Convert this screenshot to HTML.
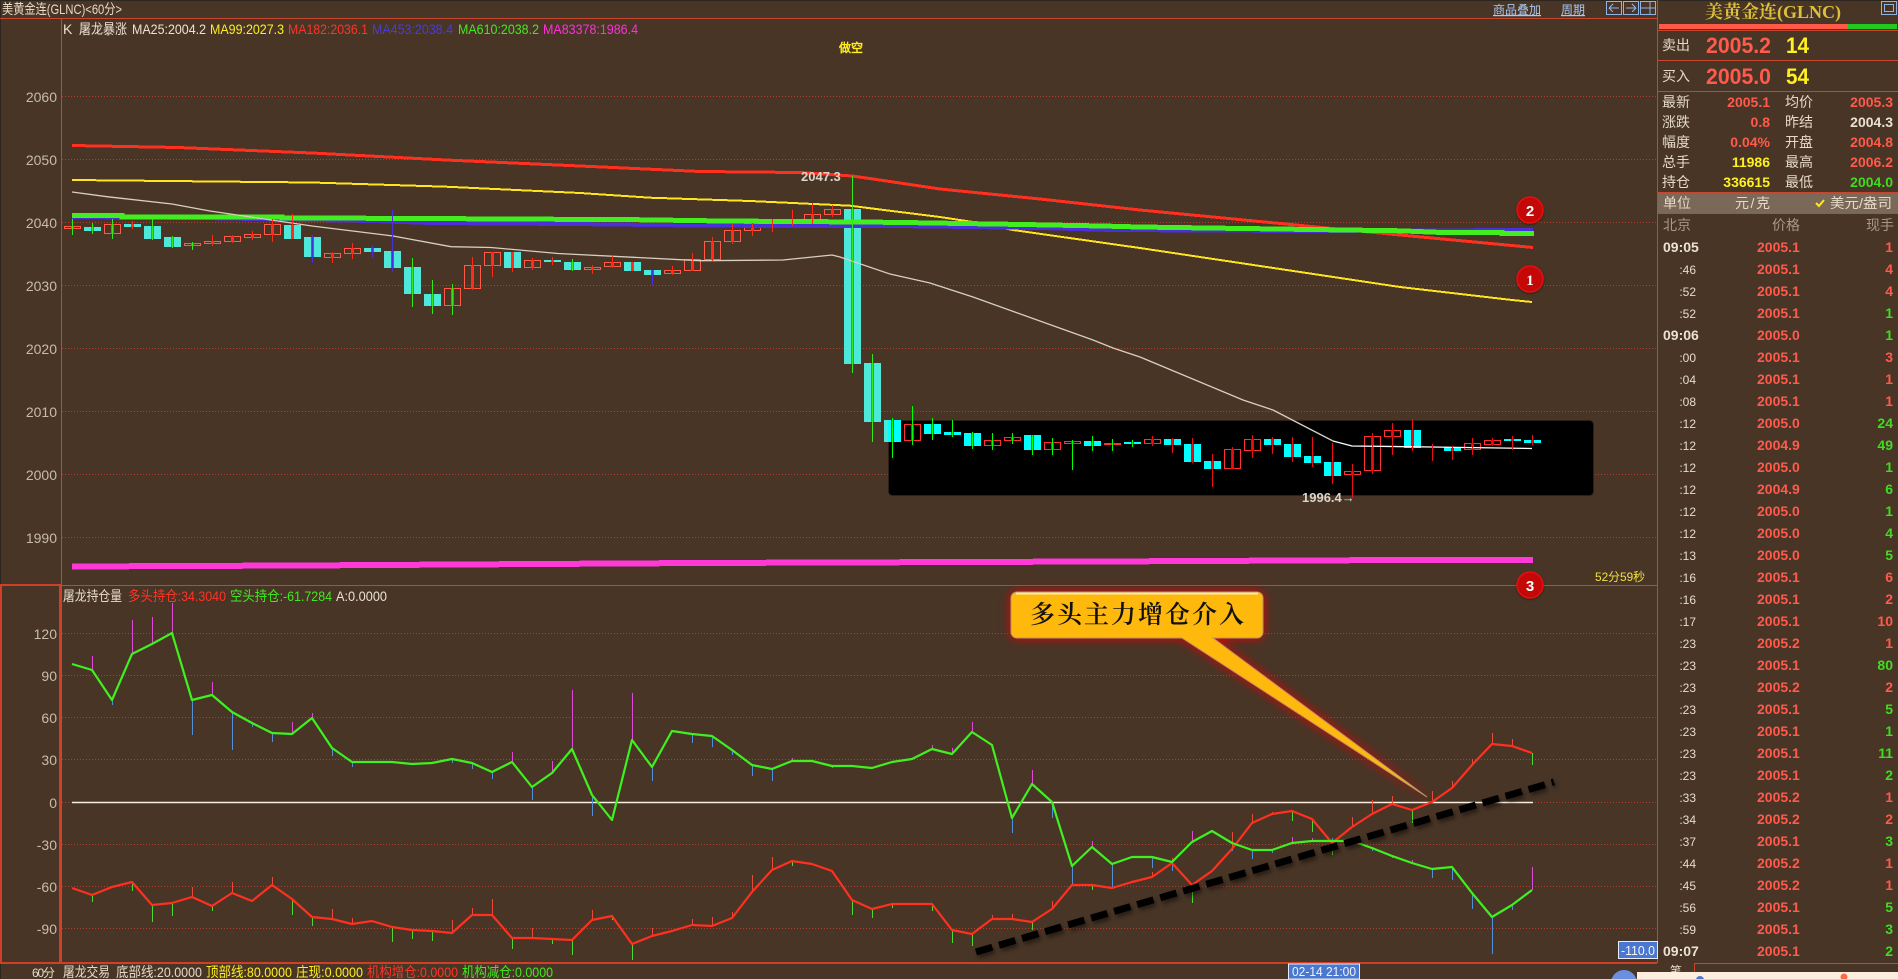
<!DOCTYPE html>
<html lang="zh"><head><meta charset="utf-8"><title>美黄金连(GLNC)</title>
<style>
html,body{margin:0;padding:0;background:#483526;width:1898px;height:979px;overflow:hidden}
svg{display:block}
text{font-family:"Liberation Sans","WenQuanYi Zen Hei",sans-serif;font-size:14px}
.cn{fill:#e6dac6;font-size:14px}
.n{font-weight:700;font-size:14px}
.r{fill:#ff5a4c}.g{fill:#3fdc20}.y{fill:#fff020}.w{fill:#ece2d2}
.e{text-anchor:end}
.ax{fill:#c8bca8;font-size:14px;text-anchor:end}
.h{font-size:14px}
.t{fill:#e6dccc;font-size:12px;text-anchor:end}
.tb{fill:#ece2d2;font-weight:700;font-size:14px}
.c{fill:none;shape-rendering:crispEdges}
</style></head><body>
<svg width="1898" height="979" viewBox="0 0 1898 979" xmlns="http://www.w3.org/2000/svg">
<rect width="1898" height="979" fill="#483526"/>
<rect width="1898" height="1" fill="#2c2620"/><rect width="1" height="979" fill="#2c2620"/>

<!-- grid -->
<path d="M62 96.5H1657M62 159.5H1657M62 222.5H1657M62 285.5H1657M62 348.5H1657M62 411.5H1657M62 474.5H1657M62 537.5H1657M62 633.5H1657M62 675.5H1657M62 717.5H1657M62 759.5H1657M62 802.5H1657M62 844.5H1657M62 886.5H1657M62 928.5H1657" stroke="#b04030" stroke-width="1" stroke-dasharray="1 2" fill="none" shape-rendering="crispEdges"/>

<!-- frame lines -->
<path d="M0 18.5H1657M61.5 18V963M0 585.5H1657" stroke="#c8452e" fill="none" shape-rendering="crispEdges"/>
<rect x="1" y="585" width="59" height="378" fill="none" stroke="#d04028" stroke-width="2"/>
<path d="M0 963H1657" stroke="#d04028" stroke-width="2" shape-rendering="crispEdges"/>
<path d="M1657.5 0V963" stroke="#c8452e" shape-rendering="crispEdges"/>

<!-- top bar text -->
<text x="2" y="14" class="cn" textLength="120" lengthAdjust="spacingAndGlyphs">美黄金连(GLNC)&lt;60分&gt;</text>
<text x="1493" y="14" style="fill:#a8c8f0;font-size:12px;text-decoration:underline" textLength="48">商品叠加</text>
<text x="1561" y="14" style="fill:#a8c8f0;font-size:12px;text-decoration:underline" textLength="24">周期</text>
<g fill="none" stroke="#8cb4e4" shape-rendering="crispEdges">
<rect x="1606.5" y="1.5" width="15" height="13"/><rect x="1623.5" y="1.5" width="15" height="13"/><rect x="1640.5" y="1.5" width="15" height="13"/>
<path d="M1609 8H1619M1609 8L1613 4M1609 8L1613 12M1636 8H1626M1636 8L1632 4M1636 8L1632 12M1640 8H1656M1650 2V14"/>
<rect x="1881.5" y="1.5" width="15" height="13"/><rect x="1884.5" y="4.5" width="9" height="7"/>
</g>

<!-- MA header -->
<text x="63" y="34" class="w h">K</text>
<text x="79" y="34" class="w h" textLength="48" lengthAdjust="spacingAndGlyphs">屠龙暴涨</text>
<text x="132" y="34" class="h" fill="#ece2d2" textLength="74" lengthAdjust="spacingAndGlyphs">MA25:2004.2</text>
<text x="210" y="34" class="h" fill="#ffee20" textLength="74" lengthAdjust="spacingAndGlyphs">MA99:2027.3</text>
<text x="288" y="34" class="h" fill="#ff3426" textLength="80" lengthAdjust="spacingAndGlyphs">MA182:2036.1</text>
<text x="372" y="34" class="h" fill="#4a3cd8" textLength="81" lengthAdjust="spacingAndGlyphs">MA453:2038.4</text>
<text x="458" y="34" class="h" fill="#40ea20" textLength="81" lengthAdjust="spacingAndGlyphs">MA610:2038.2</text>
<text x="543" y="34" class="h" fill="#ff30d8" textLength="95" lengthAdjust="spacingAndGlyphs">MA83378:1986.4</text>
<text x="839" y="52" style="fill:#ffee20;font-size:12px;font-weight:700">做空</text>

<!-- axis labels -->
<g class="ax">
<text x="57" y="102" class="ax">2060</text><text x="57" y="165" class="ax">2050</text><text x="57" y="228" class="ax">2040</text><text x="57" y="291" class="ax">2030</text><text x="57" y="354" class="ax">2020</text><text x="57" y="417" class="ax">2010</text><text x="57" y="480" class="ax">2000</text><text x="57" y="543" class="ax">1990</text>
<text x="57" y="639" class="ax">120</text><text x="57" y="681" class="ax">90</text><text x="57" y="723" class="ax">60</text><text x="57" y="765" class="ax">30</text><text x="57" y="808" class="ax">0</text><text x="57" y="850" class="ax">-30</text><text x="57" y="892" class="ax">-60</text><text x="57" y="934" class="ax">-90</text>
</g>

<!-- black box -->
<rect x="888.5" y="420.5" width="705" height="75" rx="4" fill="#000" stroke="#2c2018"/>

<!-- candle bodies outside box -->
<path fill="#4de8da" shape-rendering="crispEdges" d="M84 227h17v4h-17zM124 224h17v3h-17zM144 226h17v13h-17zM164 237h17v10h-17zM284 225h17v14h-17zM304 237h17v20h-17zM364 248h17v4h-17zM384 251h17v17h-17zM404 267h17v27h-17zM424 294h17v12h-17zM504 252h17v16h-17zM544 260h17v2h-17zM564 262h17v8h-17zM624 262h17v9h-17zM644 270h17v5h-17zM844 209h17v155h-17zM864 363h17v59h-17zM884 420h4v22h-4z"/>
<path fill="none" stroke="#ff5a48" shape-rendering="crispEdges" d="M64.5 226.5h16v2h-16zM104.5 224.5h16v9h-16zM184.5 243.5h16v2h-16zM204.5 241.5h16v2h-16zM224.5 236.5h16v5h-16zM244.5 234.5h16v3h-16zM264.5 224.5h16v10h-16zM324.5 253.5h16v4h-16zM344.5 248.5h16v5h-16zM444.5 288.5h16v17h-16zM464.5 265.5h16v23h-16zM484.5 252.5h16v13h-16zM524.5 260.5h16v7h-16zM584.5 267.5h16v2h-16zM604.5 262.5h16v4h-16zM664.5 270.5h16v3h-16zM684.5 259.5h16v11h-16zM704.5 241.5h16v18h-16zM724.5 230.5h16v11h-16zM744.5 223.5h16v7h-16zM804.5 214.5h16v6h-16zM824.5 209.5h16v5h-16z"/>
<!-- candle bodies in box -->
<path fill="#00ffff" shape-rendering="crispEdges" d="M888 420h13v22h-13zM924 424h17v10h-17zM944 432h17v3h-17zM964 433h17v13h-17zM1024 435h17v15h-17zM1084 441h17v5h-17zM1124 442h17v2h-17zM1164 439h17v6h-17zM1184 444h17v18h-17zM1204 461h17v8h-17zM1264 439h17v6h-17zM1284 444h17v13h-17zM1304 456h17v7h-17zM1324 462h17v14h-17zM1404 430h17v18h-17zM1444 447h17v4h-17zM1504 439h17v2h-17zM1524 440h17v3h-17z"/>
<path fill="#ff3030" shape-rendering="crispEdges" d="M1104 443h17v2h-17z"/>
<path fill="none" stroke="#ff3030" shape-rendering="crispEdges" d="M904.5 424.5h16v16h-16zM984.5 440.5h16v5h-16zM1004.5 437.5h16v3h-16zM1044.5 442.5h16v7h-16zM1064.5 441.5h16v2h-16zM1144.5 439.5h16v4h-16zM1224.5 449.5h16v19h-16zM1244.5 439.5h16v11h-16zM1344.5 471.5h16v3h-16zM1364.5 436.5h16v34h-16zM1384.5 430.5h16v6h-16zM1464.5 443.5h16v6h-16zM1484.5 440.5h16v4h-16z"/>

<!-- inner bars -->
<path fill="none" stroke="#46a02e" stroke-width="3" shape-rendering="crispEdges" d="M72.5 226V229M92.5 227V231M112.5 224V234M152.5 226V239M172.5 237V247M192.5 243V246M412.5 267V294M432.5 294V306M452.5 288V306M572.5 262V270M852.5 209V364M872.5 363V422"/>
<path fill="none" stroke="#d83e28" stroke-width="3" shape-rendering="crispEdges" d="M132.5 224V227M212.5 241V244M232.5 236V242M252.5 234V238M272.5 224V235M292.5 225V239M332.5 253V258M352.5 248V254M472.5 265V289M492.5 252V266M512.5 252V268M532.5 260V268M552.5 260V262M592.5 267V270M612.5 262V267M632.5 262V271M672.5 270V274M692.5 259V271M712.5 241V260M732.5 230V242M752.5 223V231M772.5 221V225M792.5 220V222M812.5 214V221M832.5 209V215"/>
<path fill="none" stroke="#5a55c4" stroke-width="3" shape-rendering="crispEdges" d="M312.5 237V257M372.5 248V252M392.5 251V268M652.5 270V275"/>
<path fill="none" stroke="#0a8a0a" stroke-width="3" shape-rendering="crispEdges" d="M892.5 420V442M912.5 424V441M932.5 424V434M952.5 432V435M972.5 433V446M992.5 440V446M1012.5 437V441M1032.5 435V450M1052.5 442V450M1072.5 441V444M1092.5 441V446M1112.5 443V445M1132.5 442V444"/>
<path fill="none" stroke="#d80808" stroke-width="3" shape-rendering="crispEdges" d="M1152.5 439V444M1172.5 439V445M1192.5 444V462M1212.5 461V469M1232.5 449V469M1252.5 439V451M1272.5 439V445M1292.5 444V457M1312.5 456V463M1332.5 462V476M1352.5 471V475M1372.5 436V471M1392.5 430V437M1412.5 430V448M1452.5 447V451M1472.5 443V450M1492.5 440V445M1512.5 439V441M1532.5 440V443"/>

<!-- moving averages -->
<polyline class="c" stroke="#ffe420" stroke-width="2" points="72,180 312,182.5 446,186.7 580,193 650,197.7 750,201 850,205.7 900,212 940,217 973,222 1013,230 1140,248 1400,287 1512,300 1532,302"/>
<polyline class="c" stroke="#ff3020" stroke-width="3" points="72,145.5 178,147.5 312,153 446,160 580,166 700,171.5 800,172.5 852,176 873,179 940,189 1040,199 1140,210 1400,235 1533,247.5"/>
<polyline class="c" stroke="#4a30d8" stroke-width="4" points="72,217 200,218 311,220 372,221 432,223 572,224 693,225.5 793,226 893,226 972,227 1040,228 1112,230 1300,231 1533,230"/>
<polyline class="c" stroke="#42ee20" stroke-width="5" points="72,215.5 122,215.5 122,217 282,217 282,218 450,218.5 482,219 623,219.5 723,221 863,222 903,222.5 962,223.5 1023,224.5 1102,226 1140,227 1400,230.8 1442,232.5 1502,232.5 1502,233.7 1534,233.7"/>
<polyline fill="none" stroke="#d8cfc0" stroke-width="1.3" points="72,192 107,196.7 172,204 210,211 312,226 393,236 451,246.7 491,247.5 558,253.5 700,260.7 783,260 832,255 840,257 890,274 930,283 973,297 1093,340 1113,348 1140,357 1243,400 1273,410 1333,441"/>
<polyline fill="none" stroke="#ffffff" stroke-width="1.3" points="1333,441 1352,446 1432,447 1532,448.5"/>
<polyline class="c" stroke="#ff38d8" stroke-width="6" points="72,566.5 300,565.5 700,563 1100,561.5 1400,560 1533,560"/>

<!-- wicks -->
<path fill="none" stroke="#36e818" shape-rendering="crispEdges" d="M72.5 219V235M92.5 223V234M112.5 219V239M152.5 219V240M172.5 236V248M192.5 242V250M412.5 258V307M432.5 280V314M452.5 284V315M572.5 259V271M852.5 176V373M872.5 354V442"/>
<path fill="none" stroke="#ff2a18" shape-rendering="crispEdges" d="M132.5 221V229M212.5 235V246M232.5 235V243M252.5 231V240M272.5 219V242M292.5 214V239M332.5 252V263M352.5 243V259M472.5 257V290M492.5 252V277M512.5 252V272M532.5 258V270M552.5 257V265M592.5 265V274M612.5 255V268M632.5 262V271M672.5 266V275M692.5 253V271M712.5 237V261M732.5 224V244M752.5 223V236M772.5 219V232M792.5 210V226M812.5 203V224M832.5 205V217"/>
<path fill="none" stroke="#4a30d8" shape-rendering="crispEdges" d="M312.5 235V263M372.5 245V258M392.5 210V272M652.5 270V285"/>
<path fill="none" stroke="#00ff00" shape-rendering="crispEdges" d="M892.5 418V458M912.5 406V445M932.5 418V440M952.5 420V437M972.5 432V449M992.5 433V450M1012.5 433V444M1032.5 435V455M1052.5 438V455M1072.5 440V470M1092.5 436V451M1112.5 439V451M1132.5 440V447"/>
<path fill="none" stroke="#e81010" shape-rendering="crispEdges" d="M1152.5 436V446M1172.5 438V453M1192.5 438V463M1212.5 454V487M1232.5 447V469M1252.5 435V458M1272.5 437V454M1292.5 437V462M1312.5 437V467M1332.5 443V484M1352.5 464V498M1372.5 433V474M1392.5 423V455M1412.5 419V451M1432.5 444V461M1452.5 446V460M1472.5 438V455M1492.5 438V446M1512.5 436V450M1532.5 435V445"/>

<text x="801" y="181" style="fill:#dcd6cc;font-size:13px;font-weight:700">2047.3</text>
<text x="1302" y="502" style="fill:#dcd6cc;font-size:13px;font-weight:700">1996.4→</text>
<text x="1595" y="581" style="fill:#f0e040;font-size:12px" textLength="50" lengthAdjust="spacingAndGlyphs">52分59秒</text>

<!-- lower panel header -->
<text x="63" y="601" class="cn" textLength="59" lengthAdjust="spacingAndGlyphs">屠龙持仓量</text>
<text x="128" y="601" style="fill:#ff3426;font-size:14px" textLength="98" lengthAdjust="spacingAndGlyphs">多头持仓:34.3040</text>
<text x="230" y="601" style="fill:#40ea20;font-size:14px" textLength="102" lengthAdjust="spacingAndGlyphs">空头持仓:-61.7284</text>
<text x="336" y="601" style="fill:#ece2d2;font-size:14px" textLength="51" lengthAdjust="spacingAndGlyphs">A:0.0000</text>

<!-- zero line -->
<path d="M72 802.5H1533" stroke="#f8efe0" stroke-width="1.5" fill="none"/>

<!-- ticks -->
<path fill="none" stroke="#e048d8" shape-rendering="crispEdges" d="M92.5 656V670M132.5 620V654M152.5 617V644M172.5 603V633M212.5 682V695M292.5 722V734M312.5 713V718M512.5 752V762M552.5 761V773M572.5 690V749M612.5 815V820M632.5 693V740M792.5 758V761M932.5 745V750M952.5 748V754M972.5 722V732M1032.5 770V784M1092.5 841V847M1192.5 831V842M1292.5 837V843M1312.5 838V841M1412.5 860V863M1532.5 867V890"/>
<path fill="none" stroke="#5090d8" shape-rendering="crispEdges" d="M112.5 700V705M192.5 700V735M232.5 712V750M252.5 723V727M272.5 733V742M332.5 748V756M352.5 762V767M452.5 759V763M472.5 763V769M492.5 772V779M532.5 787V800M592.5 795V816M652.5 767V781M692.5 734V743M712.5 736V747M732.5 750V755M752.5 765V776M772.5 769V781M832.5 766V768M1012.5 818V833M1052.5 802V818M1072.5 866V885M1112.5 864V887M1152.5 857V868M1172.5 862V871M1232.5 843V851M1252.5 850V859M1272.5 850V853M1332.5 838V842M1372.5 848V851M1392.5 855V858M1432.5 869V878M1452.5 867V880M1472.5 893V909M1492.5 917V954M1512.5 905V910"/>
<path fill="none" stroke="#e84a38" shape-rendering="crispEdges" d="M192.5 887V897M232.5 882V893M272.5 877V885M332.5 909V919M352.5 918V924M452.5 920V933M472.5 908V915M492.5 899V915M532.5 928V938M592.5 910V920M652.5 928V936M692.5 919V925M712.5 917V926M732.5 912V918M752.5 875V892M772.5 857V870M992.5 915V919M1012.5 914V919M1052.5 901V909M1152.5 872V877M1172.5 858V863M1232.5 832V849M1252.5 814V823M1272.5 812V814M1352.5 817V827M1372.5 800V814M1392.5 796V804M1432.5 791V802M1452.5 781V788M1472.5 759V765M1492.5 733V744M1512.5 739V746"/>
<path fill="none" stroke="#50d830" shape-rendering="crispEdges" d="M92.5 895V902M132.5 882V891M152.5 905V922M172.5 903V916M212.5 906V911M292.5 899V915M312.5 917V926M392.5 927V942M412.5 930V939M432.5 931V941M512.5 938V949M552.5 939V944M572.5 940V955M612.5 916V920M632.5 944V960M792.5 861V866M852.5 900V915M872.5 909V918M892.5 904V908M932.5 904V911M952.5 930V943M972.5 934V946M1032.5 922V930M1092.5 885V890M1192.5 885V903M1292.5 811V821M1312.5 819V832M1332.5 843V855M1412.5 810V823M1532.5 753V765"/>

<!-- oscillator lines -->
<polyline fill="none" stroke="#ff3020" stroke-width="2.2" stroke-linejoin="round" points="72,888 92,895 112,887 132,882 152,905 172,903 192,897 212,906 232,893 252,901 272,885 292,899 312,917 332,919 352,924 372,921 392,927 412,930 432,931 452,933 472,915 492,915 512,938 532,938 552,939 572,940 592,920 612,916 632,944 652,936 672,931 692,925 712,926 732,918 752,892 772,870 792,861 812,864 832,871 852,900 872,909 892,904 912,904 932,904 952,930 972,934 992,919 1012,919 1032,922 1052,909 1072,885 1092,885 1112,888 1132,882 1152,877 1172,863 1192,885 1212,871 1232,849 1252,823 1272,814 1292,811 1312,819 1332,843 1352,827 1372,814 1392,804 1412,810 1432,802 1452,788 1472,765 1492,744 1512,746 1532,753"/>
<polyline fill="none" stroke="#40f020" stroke-width="2.2" stroke-linejoin="round" points="72,664 92,670 112,700 132,654 152,644 172,633 192,700 212,695 232,712 252,723 272,733 292,734 312,718 332,748 352,762 372,762 392,762 412,764 432,763 452,759 472,763 492,772 512,762 532,787 552,773 572,749 592,795 612,820 632,740 652,767 672,731 692,734 712,736 732,750 752,765 772,769 792,761 812,761 832,766 852,766 872,768 892,762 912,759 932,749 952,754 972,732 992,745 1012,818 1032,784 1052,802 1072,866 1092,847 1112,864 1132,857 1152,857 1172,862 1192,842 1212,831 1232,843 1252,850 1272,850 1292,843 1312,841 1332,841 1352,841 1372,848 1392,856 1412,863 1432,869 1452,867 1472,893 1492,917 1512,905 1532,890"/>

<!-- dashed trend line -->
<path d="M976 952L1554 782" stroke="#000" stroke-width="7" stroke-dasharray="17 7" fill="none" style="filter:drop-shadow(2px 3px 2px rgba(0,0,0,.45))"/>

<!-- callout -->
<path d="M1017 592H1257a6 6 0 0 1 6 6V632a6 6 0 0 1 -6 6H1213L1427 797L1182 638H1017a6 6 0 0 1 -6 -6V598a6 6 0 0 1 6 -6z" fill="#ffb90d" stroke="#b89868" stroke-width="1" style="filter:drop-shadow(0 0 5px #e80000)"/>
<path d="M1016 593.5H1258" stroke="#ffe9a8" stroke-width="2" fill="none"/>
<text x="1030" y="623" style="font-family:'Noto Serif CJK SC','WenQuanYi Zen Hei',serif;font-size:25px;font-weight:600;fill:#111;letter-spacing:2px">多头主力增仓介入</text>

<!-- badges -->
<g style="filter:drop-shadow(0 1px 1px rgba(0,0,0,.35))">
<circle cx="1530" cy="210" r="13" fill="#c40808" stroke="#e41010" stroke-width="1.5"/>
<circle cx="1530" cy="279" r="13" fill="#c40808" stroke="#e41010" stroke-width="1.5"/>
<circle cx="1530" cy="585" r="13" fill="#c40808" stroke="#e41010" stroke-width="1.5"/>
</g>
<text x="1530" y="216" text-anchor="middle" style="fill:#fff;font-size:15px;font-weight:700">2</text>
<text x="1530" y="285" text-anchor="middle" style="fill:#fff;font-size:15px;font-weight:700;font-family:'Liberation Serif',serif">1</text>
<text x="1530" y="591" text-anchor="middle" style="fill:#fff;font-size:15px;font-weight:700">3</text>

<!-- bottom strip -->
<text x="32" y="977" class="cn" style="font-size:12px" textLength="23">60分</text>
<text x="63" y="977" class="cn" textLength="47" lengthAdjust="spacingAndGlyphs">屠龙交易</text>
<text x="116" y="977" class="cn" textLength="86" lengthAdjust="spacingAndGlyphs">底部线:20.0000</text>
<text x="206" y="977" style="fill:#ffee20;font-size:14px" textLength="86" lengthAdjust="spacingAndGlyphs">顶部线:80.0000</text>
<text x="296" y="977" style="fill:#ffee20;font-size:14px" textLength="67" lengthAdjust="spacingAndGlyphs">庄现:0.0000</text>
<text x="367" y="977" style="fill:#ff3426;font-size:14px" textLength="91" lengthAdjust="spacingAndGlyphs">机构增仓:0.0000</text>
<text x="462" y="977" style="fill:#40ea20;font-size:14px" textLength="91" lengthAdjust="spacingAndGlyphs">机构减仓:0.0000</text>
<rect x="1288.5" y="964" width="71" height="15" fill="#4a78d0" stroke="#e8ecf8"/>
<text x="1292" y="976" style="fill:#f4f4f4;font-size:13px" textLength="64" lengthAdjust="spacingAndGlyphs">02-14 21:00</text>
<rect x="1618.5" y="941.5" width="39" height="17" fill="#4a78d0" stroke="#e8ecf8"/>
<text x="1621" y="955" style="fill:#f4f4f4;font-size:13px" textLength="34" lengthAdjust="spacingAndGlyphs">-110.0</text>

<!-- right panel -->
<text x="1705" y="18" style="font-family:'Liberation Serif','Noto Serif CJK SC',serif;font-size:18px;font-weight:700;fill:#dcc03a" textLength="136" lengthAdjust="spacingAndGlyphs">美黄金连(GLNC)</text>
<rect x="1659" y="24" width="189" height="5" fill="#ff5a48"/><rect x="1848" y="24" width="49" height="5" fill="#22c820"/>
<path d="M1658 30.5H1898M1658 60.5H1898M1658 91.5H1898" stroke="#c8452e" shape-rendering="crispEdges"/>
<text x="1662" y="50" class="cn">卖出</text><text x="1662" y="81" class="cn">买入</text>
<text x="1706" y="53" style="font-size:22px;font-weight:700;fill:#ff5a4c" textLength="65" lengthAdjust="spacingAndGlyphs">2005.2</text>
<text x="1706" y="84" style="font-size:22px;font-weight:700;fill:#ff5a4c" textLength="65" lengthAdjust="spacingAndGlyphs">2005.0</text>
<text x="1786" y="53" style="font-size:22px;font-weight:700;fill:#fff020" textLength="23" lengthAdjust="spacingAndGlyphs">14</text>
<text x="1786" y="84" style="font-size:22px;font-weight:700;fill:#fff020" textLength="23" lengthAdjust="spacingAndGlyphs">54</text>

<text x="1662" y="107" class="cn">最新</text><text x="1770" y="107" class="n r e">2005.1</text><text x="1785" y="107" class="cn">均价</text><text x="1893" y="107" class="n r e">2005.3</text>
<text x="1662" y="127" class="cn">涨跌</text><text x="1770" y="127" class="n r e">0.8</text><text x="1785" y="127" class="cn">昨结</text><text x="1893" y="127" class="n w e">2004.3</text>
<text x="1662" y="147" class="cn">幅度</text><text x="1770" y="147" class="n r e">0.04%</text><text x="1785" y="147" class="cn">开盘</text><text x="1893" y="147" class="n r e">2004.8</text>
<text x="1662" y="167" class="cn">总手</text><text x="1770" y="167" class="n y e">11986</text><text x="1785" y="167" class="cn">最高</text><text x="1893" y="167" class="n r e">2006.2</text>
<text x="1662" y="187" class="cn">持仓</text><text x="1770" y="187" class="n y e">336615</text><text x="1785" y="187" class="cn">最低</text><text x="1893" y="187" class="n g e">2004.0</text>

<rect x="1658" y="192" width="240" height="21" fill="#7a6858"/>
<path d="M1658 192.5H1898M1658 213.5H1898" stroke="#c8452e" shape-rendering="crispEdges"/>
<text x="1663" y="208" class="cn">单位</text><text x="1735" y="208" class="cn" textLength="35">元/克</text>
<path d="M1816 203L1819 206L1824 200" fill="none" stroke="#ffe820" stroke-width="2"/>
<text x="1830" y="208" class="cn" textLength="62" lengthAdjust="spacingAndGlyphs">美元/盎司</text>

<text x="1663" y="230" style="fill:#a89888">北京</text><text x="1772" y="230" style="fill:#a89888">价格</text><text x="1866" y="230" style="fill:#a89888">现手</text>

<!-- tape -->
<text x="1663" y="252" class="tb">09:05</text><text x="1757" y="252" class="n r">2005.1</text><text x="1893" y="252" class="n r e">1</text>
<text x="1696" y="274" class="t">:46</text><text x="1757" y="274" class="n r">2005.1</text><text x="1893" y="274" class="n r e">4</text>
<text x="1696" y="296" class="t">:52</text><text x="1757" y="296" class="n r">2005.1</text><text x="1893" y="296" class="n r e">4</text>
<text x="1696" y="318" class="t">:52</text><text x="1757" y="318" class="n r">2005.1</text><text x="1893" y="318" class="n g e">1</text>
<text x="1663" y="340" class="tb">09:06</text><text x="1757" y="340" class="n r">2005.0</text><text x="1893" y="340" class="n g e">1</text>
<text x="1696" y="362" class="t">:00</text><text x="1757" y="362" class="n r">2005.1</text><text x="1893" y="362" class="n r e">3</text>
<text x="1696" y="384" class="t">:04</text><text x="1757" y="384" class="n r">2005.1</text><text x="1893" y="384" class="n r e">1</text>
<text x="1696" y="406" class="t">:08</text><text x="1757" y="406" class="n r">2005.1</text><text x="1893" y="406" class="n r e">1</text>
<text x="1696" y="428" class="t">:12</text><text x="1757" y="428" class="n r">2005.0</text><text x="1893" y="428" class="n g e">24</text>
<text x="1696" y="450" class="t">:12</text><text x="1757" y="450" class="n r">2004.9</text><text x="1893" y="450" class="n g e">49</text>
<text x="1696" y="472" class="t">:12</text><text x="1757" y="472" class="n r">2005.0</text><text x="1893" y="472" class="n g e">1</text>
<text x="1696" y="494" class="t">:12</text><text x="1757" y="494" class="n r">2004.9</text><text x="1893" y="494" class="n g e">6</text>
<text x="1696" y="516" class="t">:12</text><text x="1757" y="516" class="n r">2005.0</text><text x="1893" y="516" class="n g e">1</text>
<text x="1696" y="538" class="t">:12</text><text x="1757" y="538" class="n r">2005.0</text><text x="1893" y="538" class="n g e">4</text>
<text x="1696" y="560" class="t">:13</text><text x="1757" y="560" class="n r">2005.0</text><text x="1893" y="560" class="n g e">5</text>
<text x="1696" y="582" class="t">:16</text><text x="1757" y="582" class="n r">2005.1</text><text x="1893" y="582" class="n r e">6</text>
<text x="1696" y="604" class="t">:16</text><text x="1757" y="604" class="n r">2005.1</text><text x="1893" y="604" class="n r e">2</text>
<text x="1696" y="626" class="t">:17</text><text x="1757" y="626" class="n r">2005.1</text><text x="1893" y="626" class="n r e">10</text>
<text x="1696" y="648" class="t">:23</text><text x="1757" y="648" class="n r">2005.2</text><text x="1893" y="648" class="n r e">1</text>
<text x="1696" y="670" class="t">:23</text><text x="1757" y="670" class="n r">2005.1</text><text x="1893" y="670" class="n g e">80</text>
<text x="1696" y="692" class="t">:23</text><text x="1757" y="692" class="n r">2005.2</text><text x="1893" y="692" class="n r e">2</text>
<text x="1696" y="714" class="t">:23</text><text x="1757" y="714" class="n r">2005.1</text><text x="1893" y="714" class="n g e">5</text>
<text x="1696" y="736" class="t">:23</text><text x="1757" y="736" class="n r">2005.1</text><text x="1893" y="736" class="n g e">1</text>
<text x="1696" y="758" class="t">:23</text><text x="1757" y="758" class="n r">2005.1</text><text x="1893" y="758" class="n g e">11</text>
<text x="1696" y="780" class="t">:23</text><text x="1757" y="780" class="n r">2005.1</text><text x="1893" y="780" class="n g e">2</text>
<text x="1696" y="802" class="t">:33</text><text x="1757" y="802" class="n r">2005.2</text><text x="1893" y="802" class="n r e">1</text>
<text x="1696" y="824" class="t">:34</text><text x="1757" y="824" class="n r">2005.2</text><text x="1893" y="824" class="n r e">2</text>
<text x="1696" y="846" class="t">:37</text><text x="1757" y="846" class="n r">2005.1</text><text x="1893" y="846" class="n g e">3</text>
<text x="1696" y="868" class="t">:44</text><text x="1757" y="868" class="n r">2005.2</text><text x="1893" y="868" class="n r e">1</text>
<text x="1696" y="890" class="t">:45</text><text x="1757" y="890" class="n r">2005.2</text><text x="1893" y="890" class="n r e">1</text>
<text x="1696" y="912" class="t">:56</text><text x="1757" y="912" class="n r">2005.1</text><text x="1893" y="912" class="n g e">5</text>
<text x="1696" y="934" class="t">:59</text><text x="1757" y="934" class="n r">2005.1</text><text x="1893" y="934" class="n g e">3</text>
<text x="1663" y="956" class="tb">09:07</text><text x="1757" y="956" class="n r">2005.1</text><text x="1893" y="956" class="n g e">2</text>

<path d="M1694.5 972V963.5H1898" fill="none" stroke="#c8452e" shape-rendering="crispEdges"/>
<text x="1670" y="975" class="cn" style="font-size:12px">笔</text>

<!-- taskbar sliver -->
<rect x="1637" y="972" width="261" height="7" fill="#fdeee0"/>
<circle cx="1624" cy="983" r="13" fill="#6a8fe0"/>
<circle cx="1700" cy="980" r="4" fill="#4a78d0"/>
<circle cx="1844" cy="977" r="3.5" fill="#ff6a40"/>
</svg>
</body></html>
